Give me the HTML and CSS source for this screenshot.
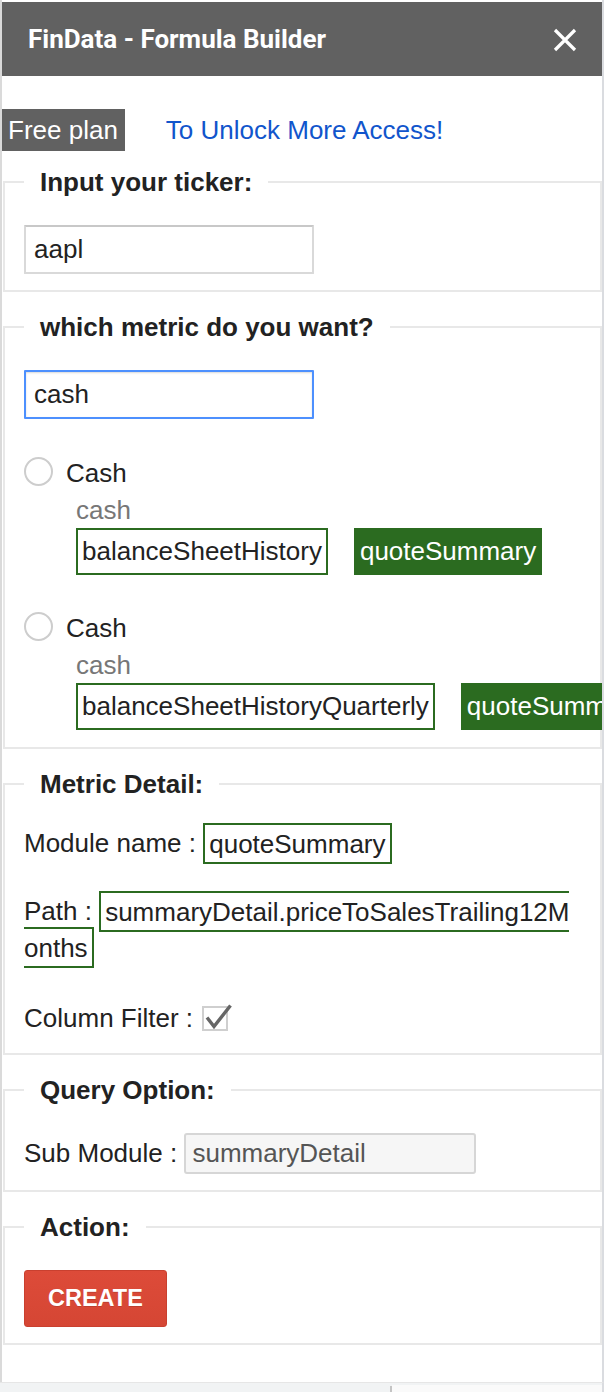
FILE: index.html
```html
<!DOCTYPE html>
<html>
<head>
<meta charset="utf-8">
<title>FinData - Formula Builder</title>
<link rel="stylesheet" href="styles.css">
</head>
<body>
<div class="panel">
  <header class="titlebar">
    <span class="title">FinData - Formula Builder</span>
    <svg class="close" width="24" height="24" viewBox="0 0 24 24" aria-label="Close">
      <path d="M2 2 L22 22 M22 2 L2 22" stroke="#fff" stroke-width="3.2" fill="none"/>
    </svg>
  </header>

  <div class="plan-row">
    <span class="plan">Free plan</span>
    <a class="unlock" href="#">To Unlock More Access!</a>
  </div>

  <fieldset class="group">
    <legend>Input your ticker:</legend>
    <input class="text-input" type="text" value="aapl">
  </fieldset>

  <fieldset class="group group-metric">
    <legend>which metric do you want?</legend>
    <input class="text-input focused" type="text" value="cash">

    <div class="option">
      <div class="option-head"><span class="radio"></span><span class="option-name">Cash</span></div>
      <div class="option-body">
        <div class="sub-label">cash</div>
        <div class="tags">
          <span class="tag">balanceSheetHistory</span>
          <span class="tag filled">quoteSummary</span>
        </div>
      </div>
    </div>

    <div class="option">
      <div class="option-head"><span class="radio"></span><span class="option-name">Cash</span></div>
      <div class="option-body">
        <div class="sub-label">cash</div>
        <div class="tags">
          <span class="tag">balanceSheetHistoryQuarterly</span>
          <span class="tag filled">quoteSummary</span>
        </div>
      </div>
    </div>
  </fieldset>

  <fieldset class="group group-detail">
    <legend>Metric Detail:</legend>
    <p class="detail-row row-module">Module name : <span class="value">quoteSummary</span></p>
    <p class="detail-row row-path">Path : <span class="value">summaryDetail.priceToSalesTrailing12Months</span></p>
    <p class="detail-row row-filter">Column Filter : <svg class="check" width="30" height="28" viewBox="0 0 30 28"><rect x="1" y="4" width="24" height="23" fill="#fff" stroke="#cfcfcf" stroke-width="2"/><path d="M5 14.5 L12 23.5 L28.5 2.5" stroke="#666" stroke-width="3.4" fill="none"/></svg></p>
  </fieldset>

  <fieldset class="group">
    <legend>Query Option:</legend>
    <p class="detail-row row-sub">Sub Module : <input class="sub-input" type="text" value="summaryDetail" readonly></p>
  </fieldset>

  <fieldset class="group">
    <legend>Action:</legend>
    <button class="create" type="button">CREATE</button>
  </fieldset>
</div>
<div class="hscroll">
  <div class="hscroll-left"></div>
  <div class="hscroll-tick"></div>
  <div class="hscroll-right"></div>
</div>
</body>
</html>
```
FILE: styles.css
```css
html, body {
  margin: 0;
  padding: 0;
  background: #fff;
}

body {
  font-family: "Liberation Sans", Arial, sans-serif;
  font-size: 26px;
  color: #222;
  width: 608px;
  overflow: hidden;
}

.panel {
  width: 600px;
  height: 1380px;
  padding-top: 2px;
  border-left: 2px solid #dadada;
  border-right: 2px solid #dadce0;
  overflow: hidden;
  background: #fff;
}

.titlebar {
  height: 74px;
  background: #616161;
  display: flex;
  align-items: center;
  justify-content: space-between;
  padding: 0 25px 0 26px;
}

.title {
  font-family: Roboto, "Liberation Sans", sans-serif;
  font-weight: 700;
  font-size: 26px;
  color: #fff;
}

.close {
  display: block;
  margin-top: 2px;
}

.plan-row {
  display: flex;
  align-items: center;
  margin-top: 33px;
}

.plan {
  background: #616161;
  color: #fff;
  line-height: 30px;
  padding: 6px 7px 6px 6px;
}

.unlock {
  margin-left: 41px;
  color: #1155cc;
  text-decoration: none;
}

.group {
  border: 2px solid #e8e8e8;
  margin: 16px 0 0 1px;
  padding: 28px 19px 16px;
  min-width: 0;
}

.group + .group {
  margin-top: 20px;
}

.group-metric {
  padding-bottom: 17px;
}

.group-detail {
  padding-top: 26px;
  padding-bottom: 17px;
}

.group legend {
  font-weight: 700;
  line-height: 30px;
  padding: 0 16px;
  color: #222;
}

.text-input {
  display: block;
  box-sizing: border-box;
  width: 290px;
  height: 49px;
  border: 2px solid #d9d9d9;
  border-top-color: #c8c8c8;
  padding: 0 8px;
  margin: 0;
  font: inherit;
  color: #222;
  outline: none;
  border-radius: 1px;
}

.text-input.focused {
  border-color: #4d90fe;
  box-shadow: inset 0 1px 2px rgba(0, 0, 0, 0.15);
}

.option {
  margin-top: 39px;
}

.option + .option {
  margin-top: 38px;
}

.option-head {
  display: flex;
  align-items: center;
  height: 30px;
}

.radio {
  box-sizing: border-box;
  width: 29px;
  height: 29px;
  border: 2px solid #cdcdcd;
  border-radius: 50%;
  background: #fff;
  margin-right: 13px;
  margin-top: -3px;
}

.option-body {
  padding-left: 52px;
}

.sub-label {
  color: #777;
  line-height: 30px;
  margin-top: 7px;
}

.tags {
  display: flex;
  gap: 26px;
  margin-top: 3px;
}

.tag {
  flex-shrink: 0;
  white-space: nowrap;
  border: 2px solid #2b6b20;
  padding: 7px 4px;
  line-height: 29px;
  color: #222;
}

.tag.filled {
  background: #2b6b20;
  color: #fff;
}

.detail-row {
  margin: 0;
  line-height: 36px;
}

.row-module {
  margin-bottom: 32px;
}

.row-path {
  margin-bottom: 35px;
  word-break: break-all;
}

.value {
  border: 2px solid #2b6b20;
  padding: 3.5px 4px;
}

.check {
  vertical-align: -4px;
  margin-left: 2px;
}

.sub-input {
  box-sizing: border-box;
  width: 292px;
  height: 41px;
  border: 2px solid #d6d6d6;
  border-radius: 3px;
  background: #f6f6f6;
  color: #555;
  font: inherit;
  padding: 0 6px;
  margin: 0;
  outline: none;
  vertical-align: baseline;
}

.create {
  display: block;
  height: 57px;
  padding: 0 23px;
  border: 1px solid #c9402f;
  border-radius: 3px;
  background: linear-gradient(#dd4b39, #d54634);
  color: #fff;
  font-family: "Liberation Sans", Arial, sans-serif;
  font-weight: 700;
  font-size: 23.5px;
  text-shadow: 0 1px rgba(0, 0, 0, 0.12);
  margin: 0;
}

.hscroll {
  display: flex;
  width: 602px;
  height: 9px;
  border-top: 1px solid #e6e6e6;
  border-right: 2px solid #dadce0;
  background: #f1f3f4;
}

.hscroll-left {
  width: 390px;
}

.hscroll-tick {
  width: 2px;
  margin-top: 3px;
  background: #c4c4c4;
}

.hscroll-right {
  flex: 1;
  margin-top: 2px;
  background: #fafafa;
}
```
